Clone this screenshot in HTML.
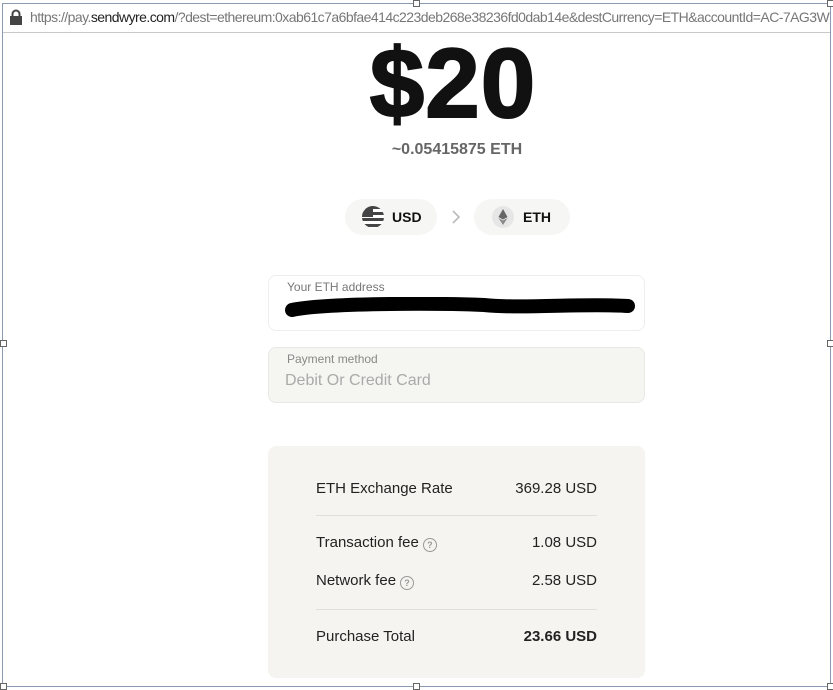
<!DOCTYPE html>
<html><head><style>
body{margin:0;width:833px;height:689px;background:#fff;font-family:"Liberation Sans",sans-serif;position:relative;overflow:hidden}
.a{position:absolute}
.fr{border:1px solid #8a9bb0}
.h{width:5px;height:5px;background:#fff;border:1px solid #666;position:absolute}
.row{position:absolute;left:316px;width:281px;font-size:15px;color:#222;display:flex;justify-content:space-between}
.q{display:inline-block;width:12px;height:12px;border:1.5px solid #999;border-radius:50%;font-size:9px;color:#999;text-align:center;line-height:12px;vertical-align:-1px;margin-left:4px;font-weight:bold}
</style></head><body>
<div class="a fr" style="left:2px;top:3px;width:827px;height:682px"></div>
<div class="a" style="left:3px;top:4px;width:827px;height:28px;background:#fff;border-bottom:1px solid #c9c9c9"></div>
<svg class="a" style="left:9px;top:9px" width="14" height="16"><rect x="1" y="7" width="12" height="9" fill="#444"/><path d="M3.5 7V5a3.5 3.5 0 0 1 7 0v2" stroke="#444" stroke-width="2" fill="none"/></svg>
<div class="a" style="left:30px;top:9px;font-size:14px;color:#777;white-space:nowrap;letter-spacing:-0.55px">https://pay.<span style="color:#222">sendwyre.com</span>/?dest=ethereum:0xab61c7a6bfae414c223deb268e38236fd0dab14e&amp;destCurrency=ETH&amp;accountId=AC-7AG3W</div>
<div class="h" style="left:413px;top:0"></div><div class="h" style="left:413px;top:683px"></div>
<div class="h" style="left:0;top:340px"></div><div class="h" style="left:827px;top:340px"></div>
<div class="h" style="left:0;top:683px"></div><div class="h" style="left:827px;top:683px"></div><div class="h" style="left:827px;top:0"></div>
<div class="a" style="left:0;width:906px;top:27px;text-align:center;font-size:98px;font-weight:bold;color:#111;letter-spacing:1px;-webkit-text-stroke:2px #111">$20</div>
<div class="a" style="left:0;width:914px;top:141px;text-align:center;font-size:16px;font-weight:bold;color:#666">~0.05415875 ETH</div>
<div class="a" style="left:345px;top:199px;width:92px;height:36px;border-radius:18px;background:#f6f6f4"></div>
<svg class="a" style="left:361px;top:205px" width="24" height="24"><circle cx="12" cy="12" r="11" fill="#fff"/><clipPath id="c"><circle cx="12" cy="12" r="11"/></clipPath><g clip-path="url(#c)" fill="#444"><rect x="0" y="1" width="24" height="3"/><rect x="0" y="7" width="24" height="3"/><rect x="0" y="13" width="24" height="3"/><rect x="0" y="19" width="24" height="3"/><rect x="0" y="0" width="12" height="12"/></g></svg>
<div class="a" style="left:392px;top:209px;font-size:14px;font-weight:bold;color:#111">USD</div>
<svg class="a" style="left:451px;top:209px" width="10" height="16"><path d="M2 2L8 8 2 14" stroke="#bbb" stroke-width="1.6" fill="none"/></svg>
<div class="a" style="left:474px;top:199px;width:96px;height:36px;border-radius:18px;background:#f6f6f4"></div>
<svg class="a" style="left:491px;top:205px" width="24" height="24"><circle cx="12" cy="12" r="11" fill="#e6e6e6"/><path d="M12 4L7.5 12 12 14.5 16.5 12Z" fill="#666"/><path d="M12 15.5L7.5 13 12 20 16.5 13Z" fill="#888"/></svg>
<div class="a" style="left:523px;top:209px;font-size:14px;font-weight:bold;color:#111">ETH</div>
<div class="a" style="left:268px;top:275px;width:375px;height:54px;border:1px solid #eeeeea;border-radius:8px"></div>
<div class="a" style="left:287px;top:280px;font-size:12px;color:#777">Your ETH address</div>
<svg class="a" style="left:284px;top:297px" width="352" height="26"><path d="M8 13C40 6 150 6 200 8 240 12 300 6 344 9" stroke="#000" stroke-width="14" stroke-linecap="round" fill="none"/></svg>
<div class="a" style="left:268px;top:347px;width:375px;height:54px;border:1px solid #e9e9e4;border-radius:8px;background:#f5f5f1"></div>
<div class="a" style="left:287px;top:352px;font-size:12px;color:#888">Payment method</div>
<div class="a" style="left:285px;top:372px;font-size:16px;color:#aaa">Debit Or Credit Card</div>
<div class="a" style="left:268px;top:446px;width:377px;height:232px;border-radius:8px;background:#f5f4f0"></div>
<div class="row" style="top:480px"><span>ETH Exchange Rate</span><span>369.28 USD</span></div>
<div class="a" style="left:316px;top:515px;width:281px;height:1px;background:#e0dfda"></div>
<div class="row" style="top:534px"><span>Transaction fee<span class="q">?</span></span><span>1.08 USD</span></div>
<div class="row" style="top:572px"><span>Network fee<span class="q">?</span></span><span>2.58 USD</span></div>
<div class="a" style="left:316px;top:609px;width:281px;height:1px;background:#e0dfda"></div>
<div class="row" style="top:628px"><span>Purchase Total</span><b>23.66 USD</b></div>
</body></html>
